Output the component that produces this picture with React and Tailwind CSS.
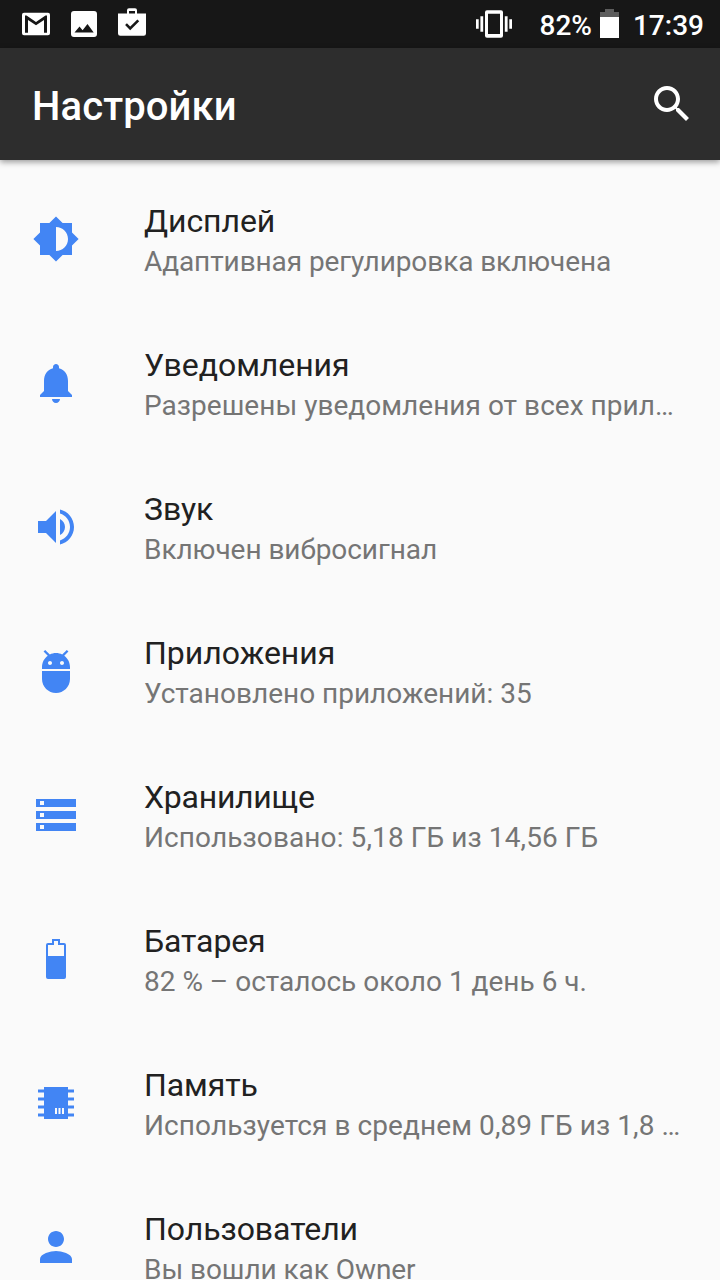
const BLUE_ICON = "block h-12 w-12 shrink-0 fill-[#4285f4]";

function Glyph({ d }) {
  return (
    <svg viewBox="0 0 24 24" className={BLUE_ICON} fillRule="evenodd">
      <path d={d} />
    </svg>
  );
}

const ITEMS = [
  {
    title: "Дисплей",
    summary: "Адаптивная регулировка включена",
    tracking: "tracking-[-0.09px]",
    icon: "M20 15.31L23.31 12 20 8.69V4h-4.69L12 .69 8.69 4H4v4.69L.69 12 4 15.31V20h4.69L12 23.31 15.31 20H20v-4.69zM12 18V6c3.31 0 6 2.69 6 6s-2.69 6-6 6z",
  },
  {
    title: "Уведомления",
    summary: "Разрешены уведомления от всех прил…",
    tracking: "tracking-[0.03px]",
    icon: "M12 22c1.1 0 2-.9 2-2h-4c0 1.1.89 2 2 2zm6-6v-5c0-3.07-1.64-5.64-4.5-6.32V4c0-.83-.67-1.5-1.5-1.5s-1.5.67-1.5 1.5v.68C7.63 5.36 6 7.92 6 11v5l-2 2v1h16v-1l-2-2z",
  },
  {
    title: "Звук",
    summary: "Включен вибросигнал",
    tracking: "tracking-[-0.05px]",
    icon: "M3 9v6h4l5 5V4L7 9H3zm13.5 3c0-1.77-1.02-3.29-2.5-4.03v8.05c1.48-.73 2.5-2.25 2.5-4.02zM14 3.23v2.06c2.89.86 5 3.54 5 6.71s-2.11 5.85-5 6.71v2.06c4.01-.91 7-4.49 7-8.77s-2.99-7.86-7-8.77z",
  },
  {
    title: "Приложения",
    titleTracking: "tracking-normal",
    summary: "Установлено приложений: 35",
    tracking: "tracking-normal",
    icon: "M5 16c0 3.87 3.13 7 7 7s7-3.13 7-7v-4H5v4zM16.12 4.37l2.1-2.1-.82-.83-2.3 2.31C14.16 3.28 13.12 3 12 3s-2.16.28-3.09.75L6.6 1.44l-.82.83 2.1 2.1C6.14 5.64 5 7.68 5 10v1h14v-1c0-2.32-1.14-4.36-2.88-5.63zM9 9c-.55 0-1-.45-1-1s.45-1 1-1 1 .45 1 1-.45 1-1 1zm6 0c-.55 0-1-.45-1-1s.45-1 1-1 1 .45 1 1-.45 1-1 1z",
  },
  {
    title: "Хранилище",
    titleTracking: "tracking-[-0.25px]",
    summary: "Использовано: 5,18 ГБ из 14,56 ГБ",
    tracking: "tracking-[0.1px]",
    icon: "M2 20h20v-4H2v4zm2-3h2v2H4v-2zM2 4v4h20V4H2zm4 3H4V5h2v2zm-4 7h20v-4H2v4zm2-3h2v2H4v-2z",
  },
  {
    title: "Батарея",
    titleTracking: "tracking-[-0.12px]",
    summary: "82 % – осталось около 1 день 6 ч.",
    tracking: "tracking-normal",
    icon: "M10 2h4v2h2q1 0 1 1v16q0 1-1 1H8q-1 0-1-1V5q0-1 1-1h2zM11 3v2H8v5.5h8V5h-3V3z",
  },
  {
    title: "Память",
    summary: "Используется в среднем 0,89 ГБ из 1,8 …",
    tracking: "tracking-[0.09px]",
    icon: "M6 4h12v1.25h3v1.5h-3v2.5h3v1.5h-3v2.5h3v1.5h-3v2.5h3v1.5h-3V20H6v-1.25H3v-1.5h3v-2.5H3v-1.5h3v-2.5H3v-1.5h3v-2.5H3v-1.5h3zM11.5 14.5v3h1v-3zM13.25 14.5v3h1v-3zM15 14.5v3h1v-3z",
  },
  {
    title: "Пользователи",
    summary: "Вы вошли как Owner",
    tracking: "tracking-[-0.06px]",
    icon: "M12 12c2.21 0 4-1.79 4-4s-1.79-4-4-4-4 1.79-4 4 1.79 4 4 4zm0 2c-2.67 0-8 1.34-8 4v2h16v-2c0-2.66-5.33-4-8-4z",
  },
];

function StatusBar() {
  return (
    <div className="flex h-12 shrink-0 items-center justify-between bg-[#171717] pr-4 pl-[22px] text-white">
      <div className="flex items-center">
        <svg viewBox="0 0 28 48" className="h-12 w-7" fill="currentColor" fillRule="evenodd">
          <path d="M2 12.7h24q2 0 2 2v18.6q0 2-2 2H2q-2 0-2-2V14.7q0-2 2-2zM3 15.5V32.7h3V20L14 25.3l8-5.3v12.7h3V15.5h-1.5L14 22 4.5 15.5z" />
        </svg>
        <svg viewBox="0 0 26 48" className="ml-[21px] h-12 w-[26px]" fill="currentColor" fillRule="evenodd">
          <path d="M3 11h20q3 0 3 3v20q0 3-3 3H3q-3 0-3-3V14q0-3 3-3zM8.5 26.5L3.5 32.5h19.2L16.5 24l-4.9 6.2z" />
        </svg>
        <svg viewBox="0 0 28 48" className="ml-[21px] h-12 w-7" fill="currentColor" fillRule="evenodd">
          <path d="M11 8.3h6q2 0 2 2V13.5h9V33.5q0 2.3-2.3 2.3H2.3Q0 35.8 0 33.5V13.5h9V10.3q0-2 2-2zM11 11v2.5h6V11z" />
          <path d="M8 24.2l4.2 4.2L20.3 20.3" fill="none" stroke="#171717" strokeWidth="2.6" />
        </svg>
      </div>
      <div className="flex items-center">
        <svg viewBox="0 0 36 48" className="h-12 w-9" fill="currentColor" fillRule="evenodd">
          <path d="M0 19.3h2.7v9.4H0zM4.4 16.3h2.8v15.4H4.4zM28.8 16.3h2.8v15.4h-2.800zM33.300 19.300h2.700v9.400h-2.700zM11 10.300h14q2 0 2 2v23.400q0 2-2 2H11q-2 0-2-2V12.300q0-2 2-2zM12 13.700v20.300h12V13.700z" />
        </svg>
        <span className="ml-[28px] pt-1 text-[28px] leading-8 font-medium">82%</span>
        <svg viewBox="0 0 20 48" className="ml-2 h-12 w-5">
          <path d="M0 12h5V9h9v3h5v5H0z" fill="#5d5d5d" />
          <path d="M0 17h19v21H0z" fill="#fff" />
        </svg>
        <span className="ml-[13px] pt-1 text-[28px] leading-8 font-medium">17:39</span>
      </div>
    </div>
  );
}

export default function App() {
  return (
    <div className="flex h-[1280px] w-[720px] flex-col overflow-hidden bg-[#fafafa] font-['Roboto','Noto_Sans',sans-serif]">
      <StatusBar />
      <header className="z-10 flex h-28 shrink-0 items-center justify-between bg-[#2d2d2d] pr-6 pl-8 text-white shadow-[0_2px_6px_rgba(0,0,0,0.4)]">
        <h1 className="pt-1.5 text-[40px] leading-[48px] font-medium tracking-[0.12px]">Настройки</h1>
        <svg viewBox="0 0 24 24" className="h-12 w-12" fill="currentColor">
          <path d="M15.5 14h-.79l-.28-.27C15.41 12.59 16 11.11 16 9.5 16 5.91 13.09 3 9.5 3S3 5.91 3 9.5 5.91 16 9.5 16c1.61 0 3.09-.59 4.23-1.57l.27.28v.79l5 4.99L20.49 19l-4.99-5zm-6 0C7.01 14 5 11.99 5 9.5S7.01 5 9.5 5 14 7.01 14 9.5 11.99 14 9.5 14z" />
        </svg>
      </header>
      <main className="flex flex-col pt-[7px]">
        {ITEMS.map((item) => (
          <div key={item.title} className="flex h-36 shrink-0 items-center gap-16 pl-8">
            <Glyph d={item.icon} />
            <div className="min-w-0 flex-1 pt-1">
              <div className={`text-[32px] leading-[41px] whitespace-nowrap text-[#212121] ${item.titleTracking ?? "tracking-[-0.06px]"}`}>
                {item.title}
              </div>
              <div className={`text-[28px] leading-[40px] whitespace-nowrap text-[#757575] ${item.tracking}`}>{item.summary}</div>
            </div>
          </div>
        ))}
      </main>
    </div>
  );
}
